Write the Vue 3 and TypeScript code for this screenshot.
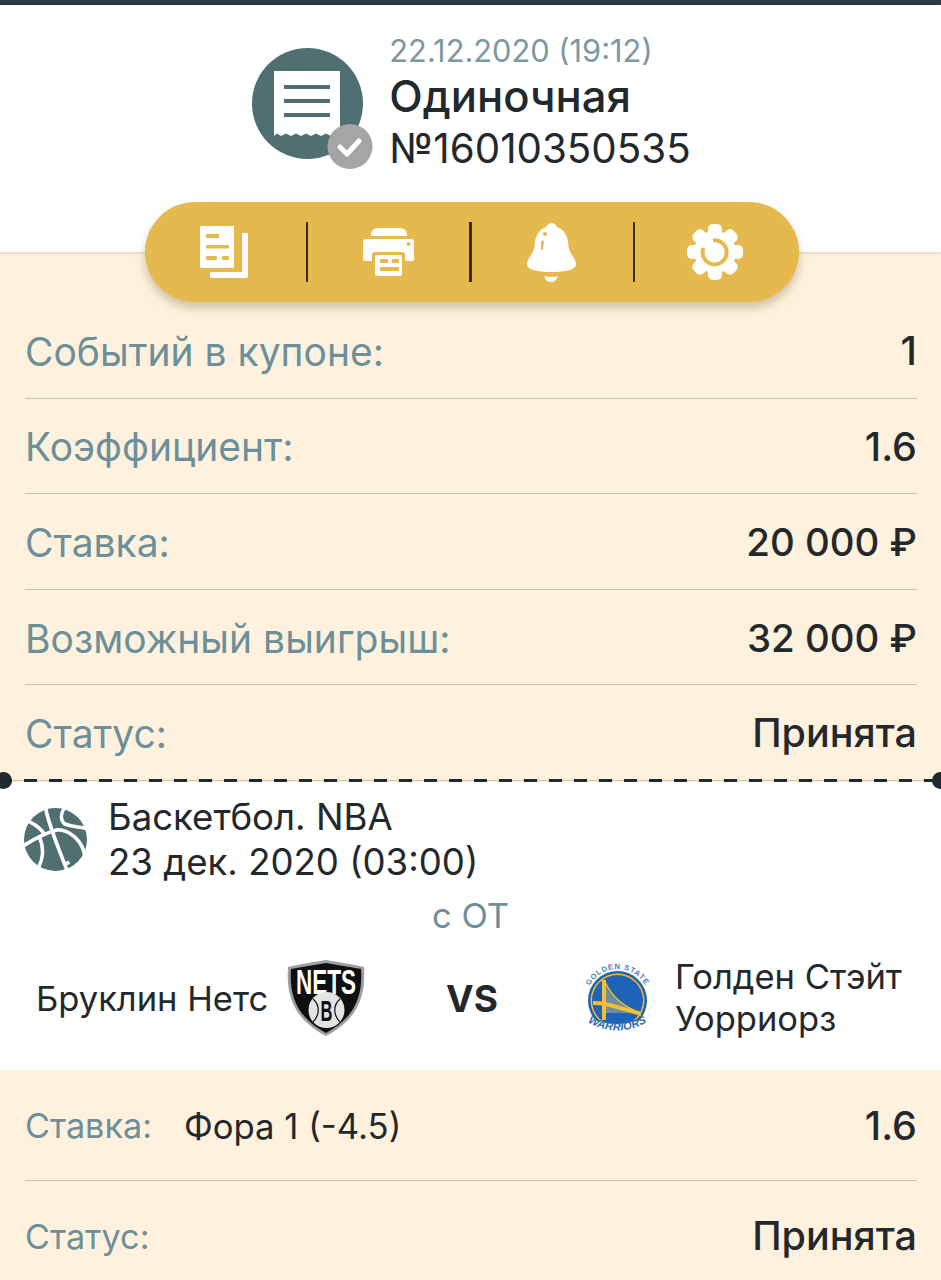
<script setup lang="ts">
interface Row { label: string; value: string; money?: boolean }
const rows: Row[] = [
  { label: 'Событий в купоне:', value: '1' },
  { label: 'Коэффициент:', value: '1.6' },
  { label: 'Ставка:', value: '20 000 ₽', money: true },
  { label: 'Возможный выигрыш:', value: '32 000 ₽', money: true },
  { label: 'Статус:', value: 'Принята' },
]
const gearAngles: number[] = [0, 45, 90, 135]
</script>

<template>
  <div class="page">
    <div class="topbar"></div>
    <header class="head">
      <div class="head-main">
        <div class="avatar">
          <svg width="122" height="122" viewBox="0 0 122 122">
            <circle cx="55.500" cy="55.500" r="55.500" fill="#4f6f71" />
            <path d="M22 23H88V88L84 85.500 79 88 74 85.500 69 88 64 85.500 59 88 54 85.500 49 88 44 85.500 39 88 34 85.500 29 88 25 85.500 22 88Z" fill="#fff" />
            <rect x="32" y="37" width="46" height="4" fill="#4f6f71" />
            <rect x="32" y="51" width="46" height="4" fill="#4f6f71" />
            <rect x="32" y="65" width="46" height="4" fill="#4f6f71" />
            <circle cx="98" cy="98.500" r="22.500" fill="#a5a5a5" />
            <path d="M88 99l7 7 12-13" fill="none" stroke="#fff" stroke-width="5" stroke-linecap="round" stroke-linejoin="round" />
          </svg>
        </div>
        <div class="head-text">
          <div class="date">22.12.2020 (19:12)</div>
          <div class="title">Одиночная</div>
          <div class="num">№16010350535</div>
        </div>
      </div>
      <div class="pill">
        <button class="pill-btn shift">
          <svg width="48" height="52" viewBox="0 0 48 52">
            <rect width="34" height="42" rx="1" fill="#fff" />
            <rect x="6" y="8" width="13" height="4" rx="1" fill="#e6b94e" />
            <rect x="6" y="19" width="23" height="3.500" rx="1" fill="#e6b94e" />
            <rect x="6" y="30" width="11" height="4" rx="1" fill="#e6b94e" />
            <rect x="22" y="30" width="7" height="4" rx="1" fill="#e6b94e" />
            <path d="M42 7H47Q48 7 48 8V50Q48 52 46 52H12Q10 52 10 50V46H42Z" fill="#fff" />
          </svg>
        </button>
        <i class="sep"></i>
        <button class="pill-btn">
          <svg width="51" height="48" viewBox="0 0 51 48">
            <path d="M8 8V6Q9 0 15 0H37Q43 0 44 6V8Z" fill="#fff" />
            <path d="M3 11H48Q51 11 51 14V31Q51 33 49 33H2Q0 33 0 31V14Q0 11 3 11Z" fill="#fff" />
            <circle cx="45.500" cy="16" r="2" fill="#e6b94e" />
            <rect x="9" y="24" width="33" height="24" rx="3" fill="#e6b94e" />
            <rect x="12" y="27" width="27" height="21" rx="2" fill="#fff" />
            <rect x="17" y="31" width="8" height="4" fill="#e6b94e" />
            <rect x="29" y="31" width="7" height="4" fill="#e6b94e" />
            <rect x="17" y="39" width="19" height="4" fill="#e6b94e" />
          </svg>
        </button>
        <i class="sep"></i>
        <button class="pill-btn">
          <svg width="49" height="59" viewBox="0 0 49 59">
            <path d="M24.500 0C27 0 29 2 30 4 38 7 41 14 41.500 23 42 31 49 35 49 41 49 47 38 49 24.500 49S0 47 0 41C0 35 7 31 7.500 23 8 14 11 7 19 4 20 2 22 0 24.500 0Z" fill="#fff" />
            <path d="M17 53Q24 55 31 53 29 59 24 59T17 53Z" fill="#fff" />
            <circle cx="18" cy="11" r="2" fill="#e6b94e" />
            <path d="M14 18L17 17.500 16 27 14 27Z" fill="#e6b94e" />
          </svg>
        </button>
        <i class="sep"></i>
        <button class="pill-btn shift">
          <svg width="56" height="56" viewBox="0 0 56 56">
            <rect
              v-for="a in gearAngles"
              :key="a"
              x="21"
              y="0"
              width="14"
              height="56"
              rx="5"
              fill="#fff"
              :transform="`rotate(${a} 28 28)`"
            />
            <circle cx="28" cy="28" r="21" fill="#fff" />
            <path d="M26 16.500A12 12 0 1 1 16.500 24" fill="none" stroke="#e6b94e" stroke-width="4" />
          </svg>
        </button>
      </div>
    </header>

    <section class="summary">
      <div v-for="r in rows" :key="r.label" class="row">
        <span class="label">{{ r.label }}</span>
        <span class="value" :class="{ money: r.money }">{{ r.value }}</span>
      </div>
    </section>

    <div class="tear">
      <i class="dot left"></i>
      <i class="dot right"></i>
    </div>

    <section class="event">
      <div class="event-head">
        <svg class="ball" width="63" height="63" viewBox="0 0 64 64">
          <circle cx="32" cy="32" r="32" fill="#4f6f71" />
          <g fill="none" stroke="#fff" stroke-width="3.600">
            <path d="M22 0C24 12 29 26 44 64" />
            <path d="M41 0C37 6 37 12 41 16 48 19 56 19 64 21" />
            <path d="M4 13C12 17 18 22 21 27" />
            <path d="M0 38C11 31 22 25 34 22 46 22 60 33 62 50" />
            <path d="M16 30C20 40 20 50 15 60" />
            <path d="M40 58L46 55" />
          </g>
        </svg>
        <div class="event-text">
          <div>Баскетбол. NBA</div>
          <div>23 дек. 2020 (03:00)</div>
        </div>
      </div>
      <div class="ot">с ОТ</div>
      <div class="match">
        <div class="home">
          <span class="team-home">Бруклин Нетс</span>
          <svg class="logo" width="78" height="78" viewBox="0 0 78 78">
            <path d="M39 1C50 3 65 5 77 8 79 35 72 60 39 77 6 60-1 35 1 8 13 5 28 3 39 1Z" fill="#9b9fa2" />
            <path d="M39 4C50 6 63 8 74 10 76 35 69 58 39 74 9 58 2 35 4 10 15 8 28 6 39 4Z" fill="#0d0f11" />
            <text class="nets" transform="translate(9 35) scale(.625 1)">NETS</text>
            <circle cx="39.500" cy="51" r="18" fill="#e3e4e4" />
            <path d="M26 40C33 46 33 56 26 63M53 40C46 46 46 56 53 63" stroke="#0d0f11" stroke-width="1.200" fill="none" />
            <rect x="32" y="38" width="15" height="26" fill="#e3e4e4" />
            <text class="b" transform="translate(33.500 62) scale(.55 1)">B</text>
          </svg>
        </div>
        <div class="vs">VS</div>
        <div class="away">
          <svg class="logo" width="68" height="80" viewBox="0 0 68 80">
            <defs>
              <path id="gs-arc" d="M3 42.500A31.500 31.500 0 0 1 66 42.500" />
              <path id="war-arc" d="M3 63Q34 82 66 63" />
            </defs>
            <circle cx="34.500" cy="42.500" r="29.500" fill="#1f63ad" />
            <circle cx="34.500" cy="42.500" r="27" fill="#f2b93a" />
            <circle cx="34.500" cy="42.500" r="25.500" fill="#1d63b7" />
            <path d="M20 23C26 36 38 49 58 55H20Z" fill="#6f8f9c" />
            <path d="M19 22H23V62H19Z" fill="#f6bf36" />
            <path d="M10 43C20 42 38 48 58 54V58C38 52 20 46 10 47Z" fill="#f6bf36" />
            <path d="M22 24C28 37 40 49 58 55" fill="none" stroke="#f6bf36" stroke-width="1.500" />
            <path d="M2 58Q34 74 67 58L68 74Q34 86 1 74Z" fill="#fff" />
            <text class="gs"><textPath href="#gs-arc" startOffset="50%" text-anchor="middle">GOLDEN STATE</textPath></text>
            <text class="war"><textPath href="#war-arc" startOffset="50%" text-anchor="middle">WARRIORS</textPath></text>
          </svg>
          <span class="team-away">Голден Стэйт<br />Уорриорз</span>
        </div>
      </div>
    </section>

    <section class="bet">
      <div class="row bet-row">
        <span class="bet-left"><span class="label small">Ставка:</span><span class="bet-name">Фора 1 (-4.5)</span></span>
        <span class="value">1.6</span>
      </div>
      <div class="row bet-row">
        <span class="label small">Статус:</span>
        <span class="value">Принята</span>
      </div>
    </section>
  </div>
</template>

<style>
html, body { margin: 0; background: #fef2de; }
</style>

<style scoped>
.page {
  width: 941px;
  height: 1280px;
  overflow: hidden;
  font-family: Inter, "Noto Sans", "Liberation Sans", sans-serif;
  color: #23282c;
  background: #fef2de;
}
.topbar { height: 5px; background: #2d3b45; }
.head {
  height: 247px;
  background: #fff;
  box-shadow: 0 1px 3px rgba(0, 0, 0, 0.14);
  position: relative;
  display: flex;
  flex-direction: column;
  align-items: center;
}
.head-main {
  display: flex;
  gap: 15px;
  padding-top: 28px;
  padding-left: 2px;
  height: 197px;
  box-sizing: border-box;
  flex: none;
}
.avatar { padding-top: 15px; width: 122px; }
.avatar svg { display: block; }
.head-text { display: flex; flex-direction: column; }
.date { font-size: 30.800px; line-height: 36px; color: #7b98a3; height: 38px; }
.title { font-size: 43.600px; line-height: 52px; font-weight: 500; height: 52px; }
.num { font-size: 40.300px; line-height: 52px; }
.pill {
  flex: none;
  width: 654px;
  height: 100px;
  margin-left: 2px;
  box-sizing: border-box;
  border-radius: 50px;
  background: #e6b94e;
  box-shadow: 0 6px 10px rgba(90, 70, 20, 0.28);
  display: grid;
  grid-template-columns: 161px 2px 161.500px 2px 161.500px 2px 163px;
  align-items: center;
  position: relative;
  z-index: 2;
}
.pill-btn {
  all: unset;
  display: flex;
  justify-content: center;
}
.pill-btn svg { display: block; }
.pill-btn.shift { padding-right: 3px; }
.sep { display: block; width: 2.500px; height: 60px; background: #3a2c10; }
.summary { padding: 51px 24px 0 25px; }
.row {
  display: flex;
  justify-content: space-between;
  align-items: center;
  height: 95.600px;
  box-sizing: border-box;
  border-bottom: 1px solid #cfc29f;
}
.summary .row { padding-top: 2px; }
.summary .row:last-child { border-bottom: 0; height: 94px; }
.label { font-size: 39px; color: #6d8f99; }
.label.small { font-size: 34.200px; }
.value { font-size: 39.500px; font-weight: 500; color: #23282c; }
.value.money { font-size: 38.400px; }
.tear {
  height: 3px;
  position: relative;
  background:
    linear-gradient(90deg, #1f2a30 13px, transparent 13px) 24px 0 / 25px 3px repeat-x,
    linear-gradient(#cfc29f, #cfc29f) 0 1px / 100% 1px no-repeat;
}
.dot {
  position: absolute;
  top: -7px;
  width: 17px;
  height: 17px;
  border-radius: 50%;
  background: #1f2a30;
}
.dot.left { left: -5px; }
.dot.right { right: -8px; }
.event {
  background: #fff;
  height: 288px;
  box-sizing: border-box;
  padding-top: 13px;
}
.event-head { display: flex; gap: 21px; padding-left: 24px; align-items: flex-start; }
.ball { margin-top: 13px; flex: none; }
.event-text { font-size: 36.600px; line-height: 45px; }
.ot {
  text-align: center;
  font-size: 34.500px;
  line-height: 40px;
  color: #6d8f99;
  margin-top: 11px;
}
.match {
  display: grid;
  grid-template-columns: 430px 84px 1fr;
  align-items: center;
  margin-top: 20px;
}
.home { display: flex; align-items: center; gap: 19px; padding-left: 36px; }
.logo { flex: none; display: block; }
.team-home { font-size: 34.500px; white-space: nowrap; }
.vs { text-align: center; font-size: 37px; font-weight: 700; }
.away { display: flex; align-items: center; gap: 24px; padding-left: 69px; }
.team-away { font-size: 34.500px; line-height: 42px; white-space: nowrap; }
.nets { font: 700 36px "Liberation Sans", sans-serif; fill: #fff; }
.b { font: 700 30px "Liberation Sans", sans-serif; fill: #0d0f11; }
.war { font: italic 700 11px "Liberation Sans", sans-serif; fill: #2d6db5; letter-spacing: 0.2px; }
.gs { font: 700 7.500px "Liberation Sans", sans-serif; fill: #4a80b8; letter-spacing: 0.9px; }
.bet { padding: 1px 24px 0 25px; }
.bet-row { height: 110px; }
.bet-row:last-child { border-bottom: 0; }
.bet-left { display: flex; align-items: center; gap: 32px; }
.bet-name { font-size: 34.700px; color: #23282c; }
</style>
